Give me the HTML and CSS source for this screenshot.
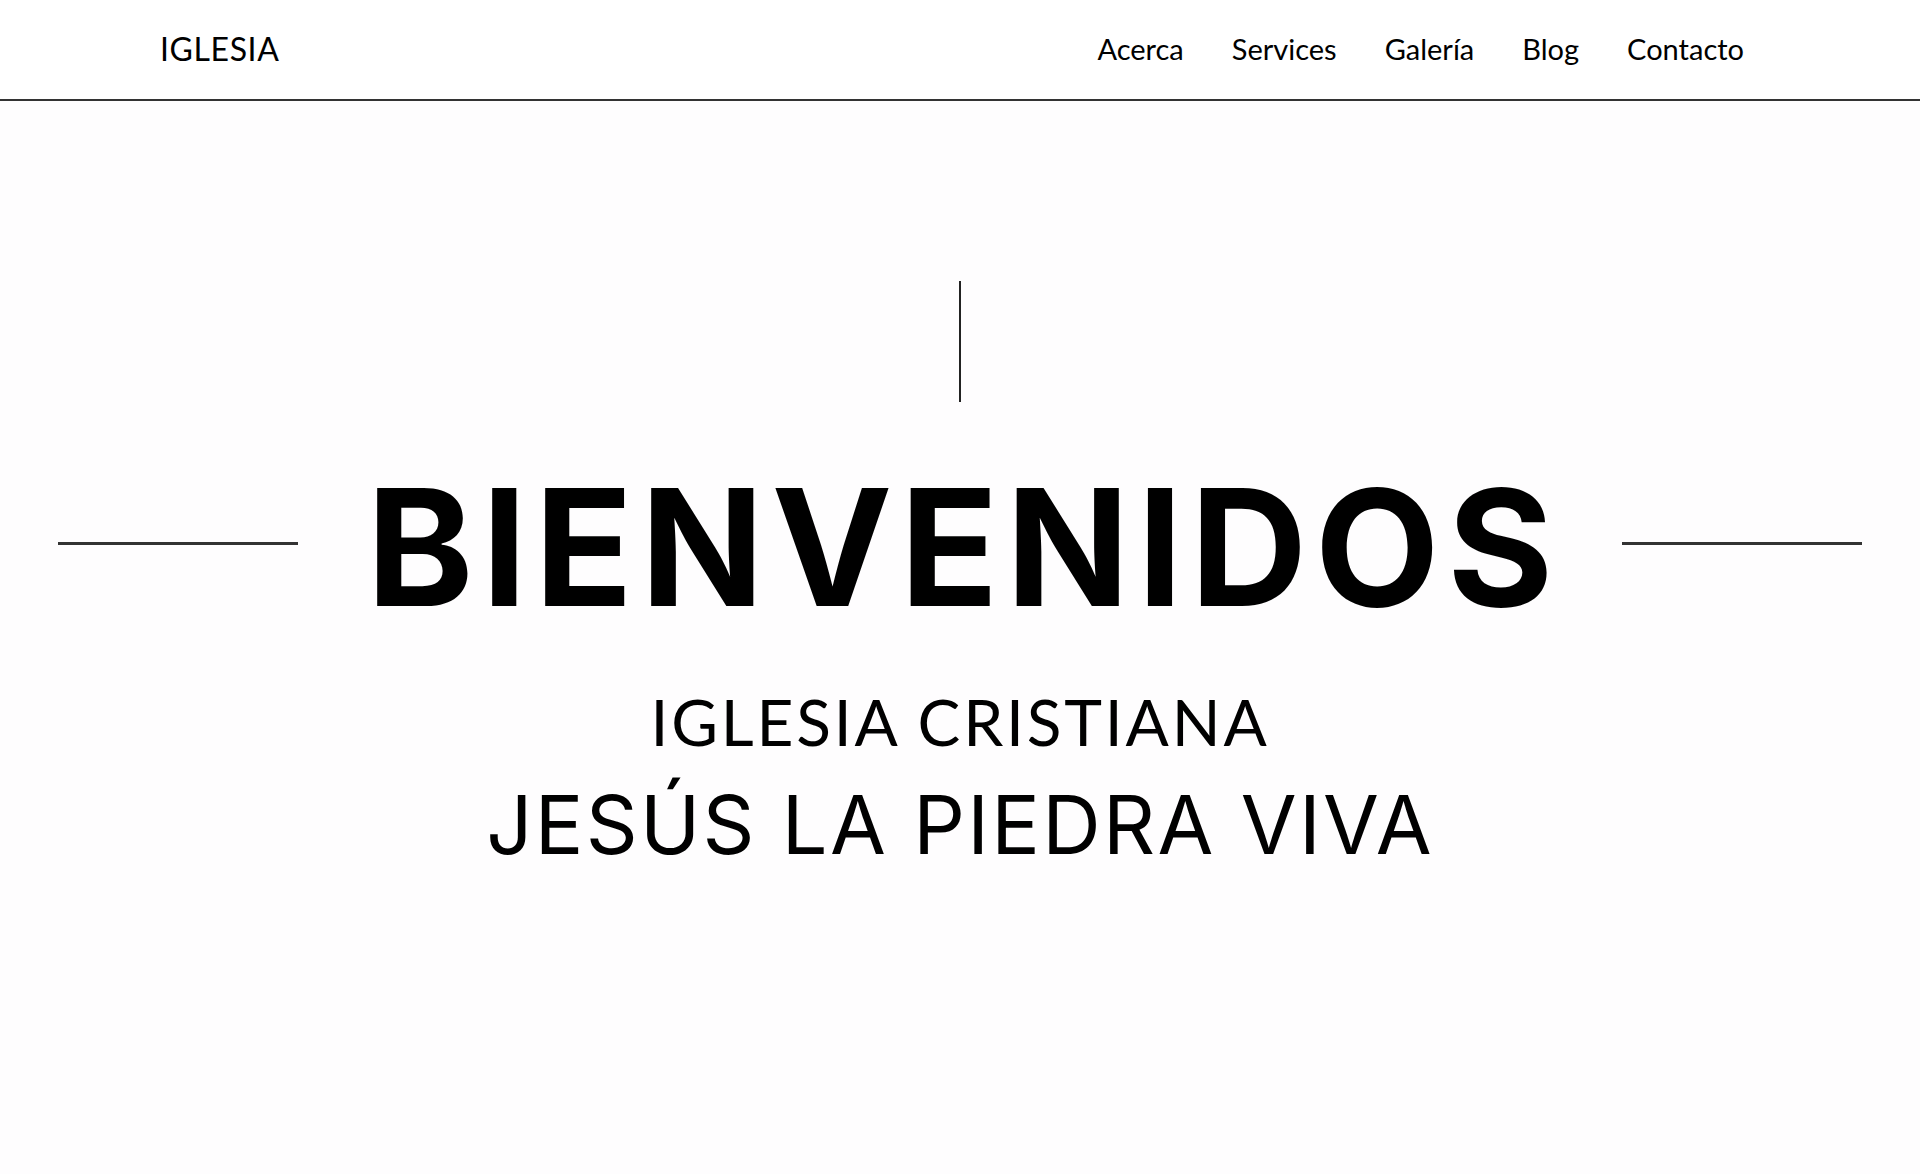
FILE: index.html
```html
<!DOCTYPE html>
<html lang="es">
<head>
<meta charset="utf-8">
<title>Iglesia</title>
<link rel="stylesheet" href="styles.css">
</head>
<body>
<header class="site-header">
  <div class="logo">IGLESIA</div>
  <nav class="nav">
    <a href="#">Acerca</a>
    <a href="#">Services</a>
    <a href="#">Galería</a>
    <a href="#">Blog</a>
    <a href="#">Contacto</a>
  </nav>
</header>
<main class="hero">
  <div class="vline"></div>
  <div class="title-row">
    <span class="hline"></span>
    <h1 class="title">BIENVENIDOS</h1>
    <span class="hline"></span>
  </div>
  <p class="sub1">IGLESIA CRISTIANA</p>
  <p class="sub2">JESÚS LA PIEDRA VIVA</p>
</main>
</body>
</html>
```

FILE: styles.css
```css
* { box-sizing: border-box; }
html, body { margin: 0; padding: 0; }
body {
  background: #fefdfe;
  color: #000;
  font-family: "Lato", "Liberation Sans", sans-serif;
  height: 1174px;
  overflow: hidden;
}
.site-header {
  height: 101px;
  background: #fff;
  border-bottom: 2px solid #333;
  display: flex;
  align-items: center;
  justify-content: space-between;
  padding: 0 176px 0 160px;
}
.logo {
  font-family: "Lato", sans-serif;
  font-size: 32px;
  font-weight: 400;
  letter-spacing: 0.6px;
  margin-top: -2px;
}
.nav {
  display: flex;
  gap: 48px;
  margin-top: -2px;
}
.nav a {
  color: #000;
  text-decoration: none;
  font-size: 29px;
  font-weight: 400;
}
.hero {
  display: flex;
  flex-direction: column;
  align-items: center;
}
.vline {
  width: 2px;
  height: 121px;
  background: #222;
  margin-top: 180px;
}
.title-row {
  width: 100%;
  display: flex;
  align-items: center;
  justify-content: space-between;
  padding: 0 58px;
  margin-top: 64px;
}
.hline {
  width: 240px;
  height: 3px;
  background: #333;
  margin-top: -8px;
}
.title {
  margin: 0;
  font-family: "Inter", sans-serif;
  font-weight: 700;
  font-size: 162px;
  line-height: 1;
  letter-spacing: 7.6px;
  margin-right: -7.6px;
}
.sub1 {
  margin: 62px 0 0;
  font-family: "Lato", sans-serif;
  font-weight: 400;
  font-size: 64px;
  line-height: 1;
  letter-spacing: 2.8px;
}
.sub2 {
  margin: 31px 0 0;
  font-family: "Inter", sans-serif;
  font-weight: 400;
  font-size: 81px;
  line-height: 1;
  letter-spacing: 2.3px;
}
```
